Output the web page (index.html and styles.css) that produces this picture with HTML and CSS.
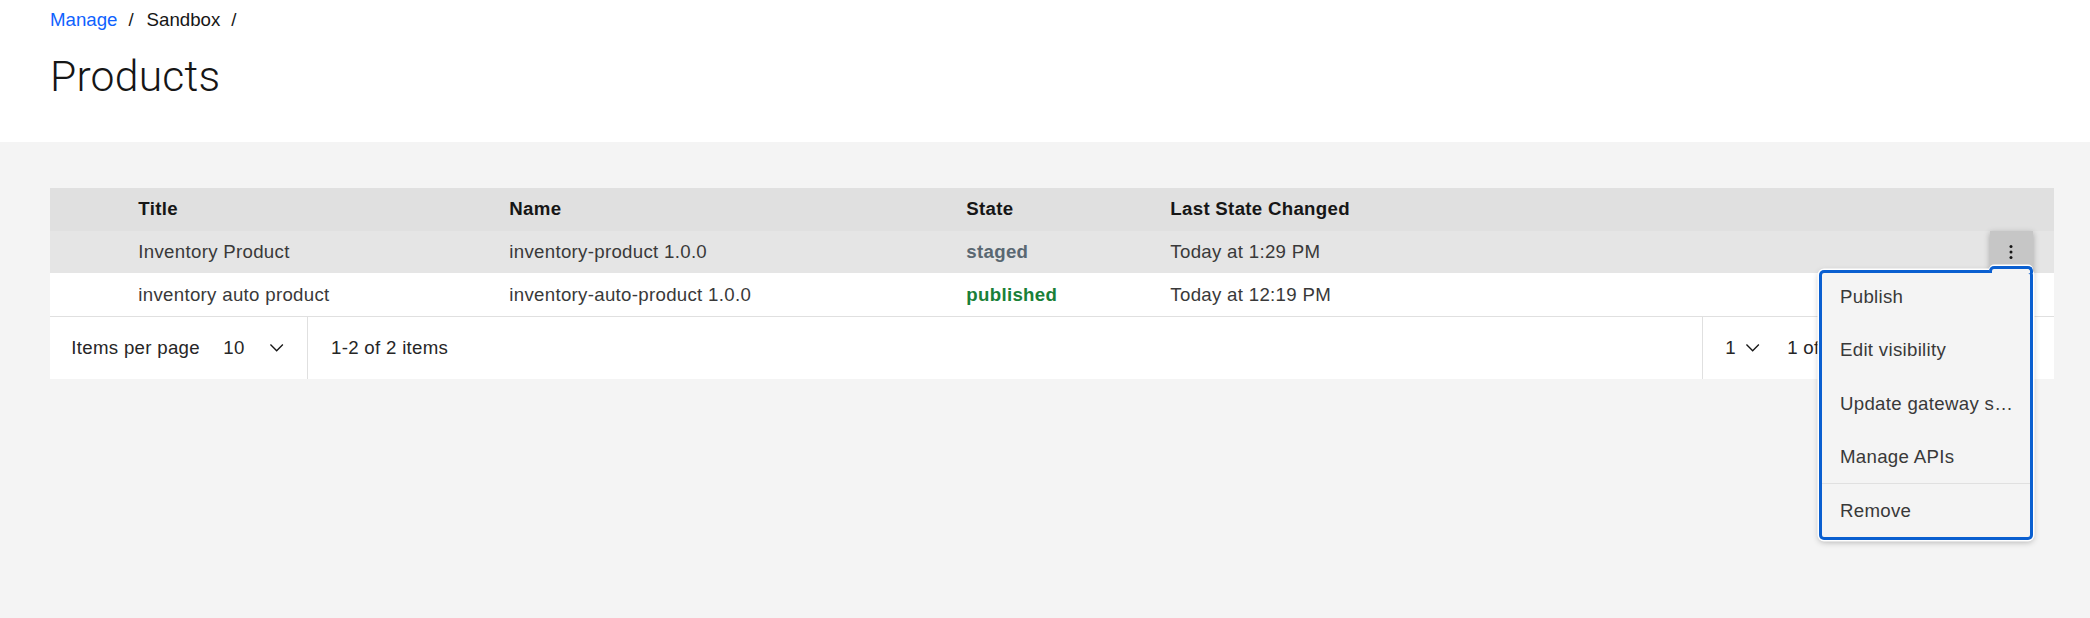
FILE: index.html
```html
<!DOCTYPE html>
<html lang="en">
<head>
<meta charset="utf-8">
<title>Products</title>
<link rel="stylesheet" href="styles.css">
</head>
<body>
<header class="page-header">
  <nav class="breadcrumb">
    <a class="crumb crumb-link" href="#">Manage</a><span class="sep">/</span><span class="crumb">Sandbox</span><span class="sep">/</span>
  </nav>
  <h1 class="page-title">Products</h1>
</header>
<main class="content">
  <div class="table-wrap">
    <table class="data-table">
      <colgroup>
        <col class="c-sel"><col class="c-title"><col class="c-name"><col class="c-state"><col class="c-last"><col class="c-over">
      </colgroup>
      <thead>
        <tr><th></th><th>Title</th><th>Name</th><th>State</th><th>Last State Changed</th><th></th></tr>
      </thead>
      <tbody>
        <tr class="row-active">
          <td></td><td>Inventory Product</td><td>inventory-product 1.0.0</td><td class="state state-staged">staged</td><td>Today at 1:29 PM</td>
          <td class="cell-overflow"><button class="overflow-btn" aria-label="Options"><svg width="22" height="22" viewBox="0 0 16 16"><circle cx="8" cy="4" r="1.1"/><circle cx="8" cy="8" r="1.1"/><circle cx="8" cy="12" r="1.1"/></svg></button></td>
        </tr>
        <tr>
          <td></td><td>inventory auto product</td><td>inventory-auto-product 1.0.0</td><td class="state state-published">published</td><td>Today at 12:19 PM</td><td class="cell-overflow"></td>
        </tr>
      </tbody>
    </table>
    <div class="pagination">
      <div class="pg-left">
        <span class="pg-label">Items per page</span>
        <div class="pg-select pg-size"><span>10</span><svg class="chev" viewBox="0 0 16 16"><path d="M8 11L3 6l.7-.7L8 9.6l4.3-4.3.7.7z"/></svg></div>
      </div>
      <span class="pg-range">1-2 of 2 items</span>
      <div class="pg-right">
        <div class="pg-select pg-page"><span>1</span><svg class="chev" viewBox="0 0 16 16"><path d="M8 11L3 6l.7-.7L8 9.6l4.3-4.3.7.7z"/></svg></div>
        <span class="pg-of">1 of 1 pages</span>
        <button class="pg-btn" aria-label="Previous page"><svg class="chev" viewBox="0 0 16 16"><path d="M5 8l5-5 .7.7L6.4 8l4.3 4.3-.7.7z"/></svg></button>
        <button class="pg-btn" aria-label="Next page"><svg class="chev" viewBox="0 0 16 16"><path d="M11 8l-5 5-.7-.7L9.6 8 5.3 3.7 6 3z"/></svg></button>
      </div>
    </div>
    <ul class="overflow-menu">
      <li class="menu-item">Publish</li>
      <li class="menu-item">Edit visibility</li>
      <li class="menu-item">Update gateway services</li>
      <li class="menu-item">Manage APIs</li>
      <li class="menu-item menu-item-divided">Remove</li>
    </ul>
  </div>
</main>
</body>
</html>
```
FILE: styles.css
```css
html, body {
  margin: 0;
  padding: 0;
}
body {
  min-height: 100vh;
  background: #f4f4f4;
  font-family: "Liberation Sans", Arial, sans-serif;
  font-size: 18.67px;
  letter-spacing: 0.3px;
  color: #161616;
}
.page-header {
  background: #ffffff;
  height: 142px;
  box-sizing: border-box;
  padding: 8px 50px 0 50px;
}
.breadcrumb {
  display: flex;
  align-items: center;
  height: 24px;
  line-height: 24px;
  letter-spacing: 0;
}
.crumb {
  color: #161616;
  text-decoration: none;
}
.crumb-link {
  color: #0f62fe;
}
.sep {
  margin: 0 13px 0 11px;
  color: #161616;
}
.page-title {
  margin: 18px 0 0 0;
  font-family: Roboto, "Liberation Sans", sans-serif;
  font-weight: 300;
  font-size: 42.67px;
  line-height: 53.33px;
  letter-spacing: 0.2px;
  color: #161616;
}
.content {
  padding: 46px 36px 0 50px;
}
.table-wrap {
  position: relative;
  width: 2004px;
}
.data-table {
  width: 100%;
  table-layout: fixed;
  border-collapse: collapse;
}
.c-sel { width: 67px; }
.c-title { width: 371px; }
.c-name { width: 457px; }
.c-state { width: 204px; }
.c-over { width: 86px; }
.data-table th,
.data-table td {
  height: 42.67px;
  padding: 0 0 0 21.33px;
  text-align: left;
  vertical-align: middle;
  white-space: nowrap;
  box-sizing: border-box;
}
.data-table th {
  background: #e0e0e0;
  font-weight: 700;
  color: #161616;
}
.data-table td {
  background: #ffffff;
  color: #393939;
}
.data-table .row-active td {
  background: #e5e5e5;
}
.data-table .state {
  font-weight: 700;
}
.data-table .state-staged {
  color: #5a6872;
}
.data-table .state-published {
  color: #198038;
}
.data-table .cell-overflow {
  padding: 0 21.33px 0 0;
  text-align: right;
}
.overflow-btn {
  width: 42.67px;
  height: 42.67px;
  border: 0;
  padding: 0;
  margin: 0;
  background: #c6c6c6;
  display: inline-flex;
  align-items: center;
  justify-content: center;
  vertical-align: middle;
  box-shadow: 0 2px 6px rgba(0, 0, 0, 0.3);
}
.overflow-btn svg {
  fill: #161616;
}
.pagination {
  display: flex;
  align-items: center;
  height: 62.67px;
  box-sizing: border-box;
  border-top: 1.33px solid #e0e0e0;
  background: #ffffff;
  color: #262626;
}
.pg-left {
  display: flex;
  align-items: stretch;
  width: 258px;
  height: 100%;
  box-sizing: border-box;
  padding-left: 21.33px;
  border-right: 1.33px solid #e0e0e0;
}
.pg-label {
  flex: none;
  width: 130.67px;
  display: flex;
  align-items: center;
  white-space: nowrap;
}
.pg-select {
  display: flex;
  align-items: center;
}
.pg-size {
  flex: 1;
  justify-content: space-between;
  padding: 0 19.33px 0 21.33px;
}
.chev {
  width: 21.33px;
  height: 21.33px;
  fill: #161616;
}
.pg-range {
  padding-left: 23px;
}
.pg-right {
  margin-left: auto;
  width: 352.33px;
  height: 100%;
  box-sizing: border-box;
  display: flex;
  align-items: center;
  padding-left: 22.5px;
  border-left: 1.33px solid #e0e0e0;
}
.pg-page .chev {
  margin-left: 6.5px;
}
.pg-of {
  margin-left: 23.5px;
  white-space: nowrap;
}
.pg-btn {
  margin: 0;
  padding: 0;
  border: 0;
  border-left: 1.33px solid #e0e0e0;
  background: #ffffff;
  width: 64px;
  height: 100%;
  display: flex;
  align-items: center;
  justify-content: center;
}
.pg-btn:first-of-type {
  margin-left: auto;
}
.pg-btn .chev {
  fill: #c6c6c6;
}
.overflow-menu {
  position: absolute;
  top: 82px;
  right: 21.33px;
  width: 214px;
  margin: 0;
  padding: 0 0 2px 0;
  list-style: none;
  background: #f4f4f4;
  border-radius: 5px;
  box-shadow: inset 0 0 0 3px #0a5fd0, 0 0 0 1.5px #ffffff, 0 2px 6px rgba(0, 0, 0, 0.3);
  z-index: 10;
}
.overflow-menu::after {
  content: "";
  position: absolute;
  top: -4px;
  right: 0;
  width: 44px;
  height: 7px;
  box-sizing: border-box;
  background: #f4f4f4;
  border: 3px solid #0a5fd0;
  border-bottom: 0;
  border-radius: 5px 5px 0 0;
  box-shadow: 0 -1.5px 0 #ffffff;
}
.menu-item {
  height: 53.33px;
  line-height: 53.33px;
  padding: 0 16px 0 21.33px;
  color: #393939;
  white-space: nowrap;
  overflow: hidden;
  text-overflow: ellipsis;
  box-sizing: border-box;
}
.menu-item-divided {
  border-top: 1.33px solid #e0e0e0;
  margin: 0 3px;
  padding-left: 18.33px;
  height: 54.67px;
}
```
